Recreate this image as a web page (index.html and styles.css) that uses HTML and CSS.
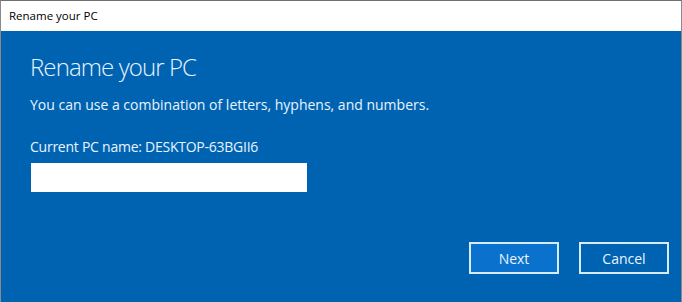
FILE: index.html
```html
<!DOCTYPE html>
<html>
<head>
<meta charset="utf-8">
<link rel="stylesheet" href="styles.css">
</head>
<body>
<div class="window">
  <div class="titlebar">Rename your PC</div>
  <div class="content">
    <h1 class="heading">Rename your PC</h1>
    <p class="desc">You can use a combination of letters, hyphens, and numbers.</p>
    <p class="current">Current PC name: DESKTOP-63BGII6</p>
    <input class="name-input" type="text">
    <div class="actions">
      <button class="btn btn-primary">Next</button>
      <button class="btn">Cancel</button>
    </div>
  </div>
</div>
</body>
</html>
```
FILE: styles.css
```css
html, body {
  margin: 0;
  padding: 0;
}
body {
  width: 682px;
  height: 302px;
  overflow: hidden;
  font-family: "Open Sans", "Noto Sans", sans-serif;
}
.window {
  width: 682px;
  height: 302px;
  box-sizing: border-box;
  border-top: 1px solid #6f6f6f;
  border-left: 1px solid #8a8a8a;
  border-right: 1px solid #8a8a8a;
  display: flex;
  flex-direction: column;
}
.titlebar {
  height: 30px;
  flex: none;
  background: #ffffff;
  color: #000;
  font-size: 11.5px;
  line-height: 30px;
  padding-left: 8px;
  box-sizing: border-box;
}
.content {
  flex: 1;
  background: #0063b1;
  color: #e8f4ff;
  padding: 0 0 0 29px;
  display: flex;
  flex-direction: column;
}
.heading {
  margin: 21px 0 0 0;
  font-size: 24px;
  font-weight: 300;
  letter-spacing: -0.9px;
  line-height: 30px;
}
.desc {
  margin: 13px 0 0 0;
  font-size: 14px;
  line-height: 20px;
}
.current {
  margin: 22px 0 0 0;
  font-size: 14px;
  letter-spacing: -0.25px;
  line-height: 20px;
}
.name-input {
  margin: 6px 0 0 1px;
  width: 276px;
  height: 29px;
  box-sizing: border-box;
  border: none;
  background: #fff;
  padding: 0;
  outline: none;
}
.actions {
  display: flex;
  justify-content: flex-end;
  gap: 20px;
  margin-top: 50px;
  padding-right: 12px;
}
.btn {
  width: 90px;
  height: 32px;
  box-sizing: border-box;
  border: 2px solid #d6ecfb;
  background: transparent;
  color: #e8f4ff;
  font-family: "Open Sans", "Noto Sans", sans-serif;
  font-size: 14px;
  padding: 0;
}
.btn-primary {
  background: #0a72cc;
}
```
